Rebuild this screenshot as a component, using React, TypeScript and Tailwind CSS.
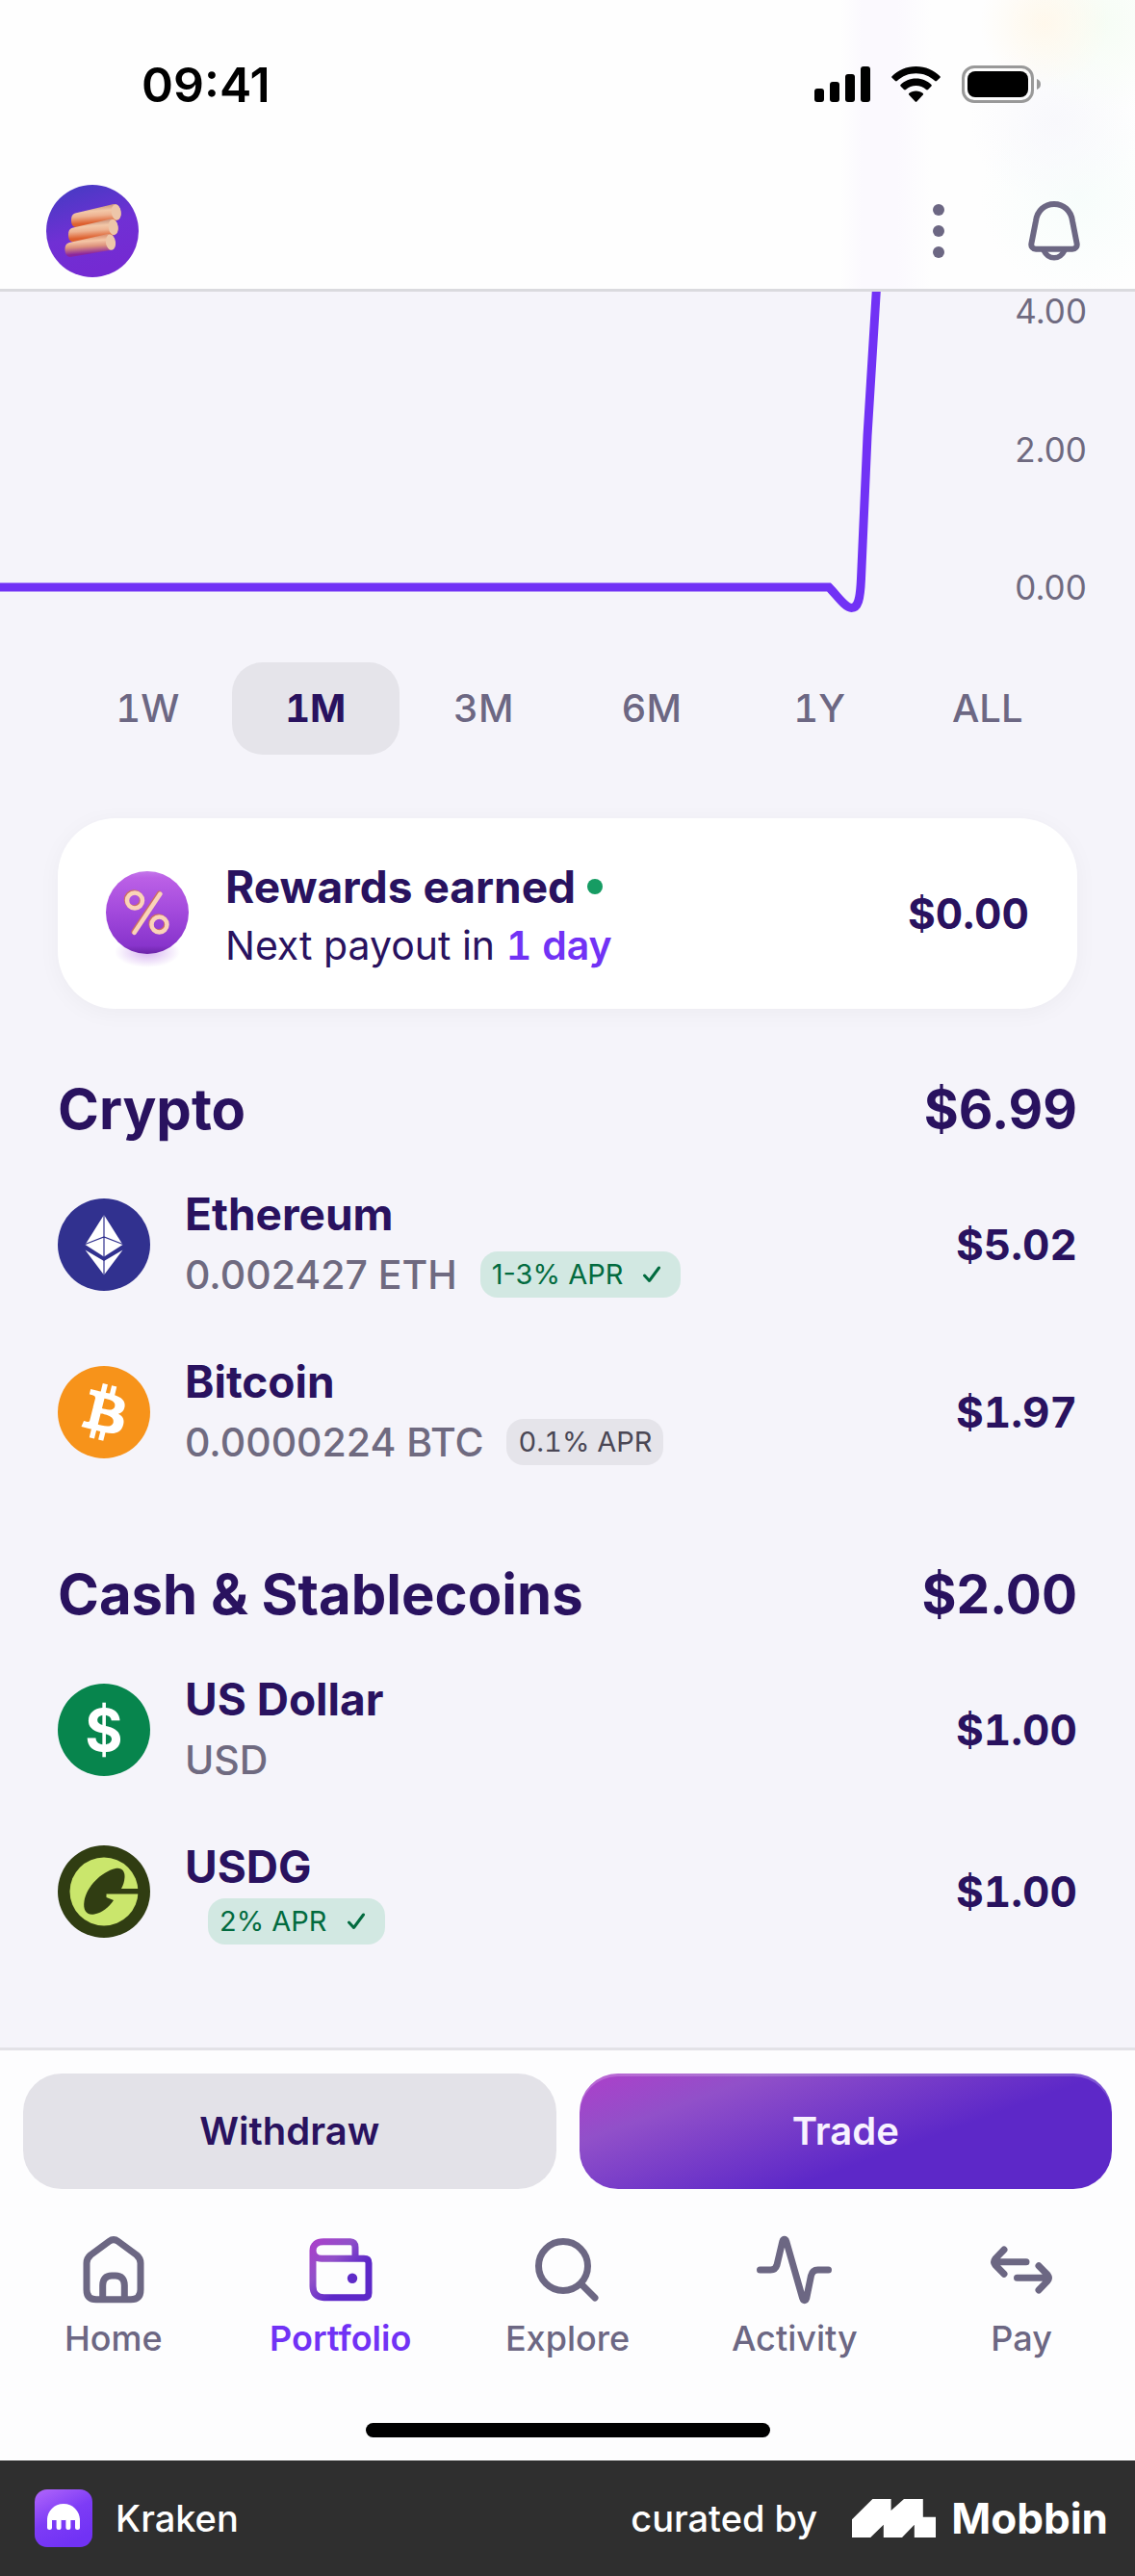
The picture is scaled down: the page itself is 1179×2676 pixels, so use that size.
import type { ReactNode } from "react";

const ranges = ["1W", "1M", "3M", "6M", "1Y", "ALL"];

function StatusIcons() {
  return (
    <svg width="236" height="40" viewBox="0 0 236 40" aria-hidden="true">
      <rect x="0" y="24" width="10" height="14" rx="3" />
      <rect x="16" y="17" width="10" height="21" rx="3" />
      <rect x="32" y="9" width="10" height="29" rx="3" />
      <rect x="48" y="1" width="10" height="37" rx="3" />
      <path d="M105.500 1C115.500 1 124 5 130.500 11.300Q131.200 12 130.500 12.700L127 16Q126 16.800 125.200 16C119.500 11 113 8.300 105.500 8.300S91.500 11 85.800 16Q85 16.800 84 16L80.500 12.700Q79.800 12 80.500 11.300C87 5 95.500 1 105.500 1Z" />
      <path d="M105.500 13.500C112 13.500 117.300 16 121.500 20Q122.200 20.800 121.500 21.500L118 25Q117 25.800 116 25C113 22.400 109.500 21 105.500 21S98 22.400 95 25Q94 25.800 93 25L89.500 21.500Q88.800 20.800 89.500 20C93.700 16 99 13.500 105.500 13.500Z" />
      <path d="M105.500 26.500C108.500 26.500 111 27.400 112.800 29Q113.500 29.700 112.800 30.500L106.300 37.500Q105.500 38.300 104.700 37.500L98.200 30.500Q97.500 29.700 98.200 29C100 27.400 102.500 26.500 105.500 26.500Z" />
      <rect x="154.500" y="1.500" width="72" height="36" rx="11.500" fill="none" stroke="#999999" strokeWidth="3" />
      <rect x="159" y="6" width="63" height="27" rx="8" />
      <path d="M231 14C234 15 235 17 235 19.500S234 24 231 25Z" fill="#999999" />
    </svg>
  );
}

function Avatar() {
  return (
    <svg className="size-24" viewBox="0 0 96 96" aria-hidden="true">
      <defs>
        <linearGradient id="avatarBg" x1="0.300" y1="0" x2="0.600" y2="0.900">
          <stop offset="0" stopColor="#483ac4" />
          <stop offset="0.550" stopColor="#7030d4" />
          <stop offset="1" stopColor="#742ad2" />
        </linearGradient>
        <linearGradient id="rod" x1="0.420" y1="0.120" x2="0.540" y2="0.880">
          <stop offset="0" stopColor="#cf9c86" />
          <stop offset="0.250" stopColor="#f3c8a8" />
          <stop offset="0.500" stopColor="#eeb291" />
          <stop offset="0.900" stopColor="#dd5f2e" />
        </linearGradient>
        <linearGradient id="rodLow" x1="0.420" y1="0.120" x2="0.540" y2="0.880">
          <stop offset="0" stopColor="#dd9678" />
          <stop offset="0.250" stopColor="#f5c6a6" />
          <stop offset="0.550" stopColor="#dd927c" />
          <stop offset="0.950" stopColor="#8b259d" />
        </linearGradient>
      </defs>
      <circle cx="48" cy="48" r="48" fill="url(#avatarBg)" />
      <path d="M30 29.500L70 20C75 19.500 77 24 77.500 29S75.500 36.500 72 37L31 44C27 44 26 40 26 36.500S27 30.500 30 29.500Z" fill="url(#rod)" />
      <ellipse cx="72.700" cy="28.500" rx="5" ry="8.200" fill="#edc6a9" transform="rotate(-8 72.700 28.500)" />
      <path d="M27 44.800L67 35.500C72 35 74 39.500 74.500 44.500S72.500 52 69 52.500L28 59.300C24 59.300 23 55.500 23 51.800S24 45.800 27 44.800Z" fill="url(#rod)" />
      <ellipse cx="69.700" cy="44" rx="5" ry="8.200" fill="#edc6a9" transform="rotate(-8 69.700 44)" />
      <path d="M24 60L64 51C69 50.500 71 55 71.500 60S69.500 67.500 66 68L25 75C21 75 19.500 71 19.500 67.200S20.500 61 24 60Z" fill="url(#rodLow)" />
      <ellipse cx="67" cy="59.700" rx="5" ry="8.200" fill="#edc6a9" transform="rotate(-8 67 59.700)" />
    </svg>
  );
}

function DotsIcon() {
  return (
    <svg width="12" height="72" viewBox="0 0 12 72" fill="#6c6783" aria-hidden="true">
      <circle cx="6" cy="14" r="6" />
      <circle cx="6" cy="36" r="6" />
      <circle cx="6" cy="58" r="6" />
    </svg>
  );
}

function BellIcon() {
  return (
    <svg width="72" height="72" viewBox="0 0 72 72" fill="none" stroke="#6c6783" strokeWidth="6" aria-hidden="true">
      <path d="M36 8C26 8 18.500 15 17 25.500L12.400 49C11.800 52.500 14 54.700 17 54.700H55C58 54.700 60.200 52.500 59.600 49L55 25.500C53.500 15 46 8 36 8Z" />
      <path d="M25 56C27.500 61 31.500 63.800 36 63.800S44.500 61 47 56" strokeWidth="5.500" />
    </svg>
  );
}

function PercentIcon() {
  return (
    <svg width="86" height="100" viewBox="0 0 86 100" className="-mb-3 shrink-0 overflow-visible" aria-hidden="true">
      <defs>
        <linearGradient id="pctBg" x1="0" y1="0" x2="0" y2="1">
          <stop offset="0" stopColor="#c478ea" />
          <stop offset="0.080" stopColor="#bb60e6" />
          <stop offset="0.500" stopColor="#a249dc" />
          <stop offset="0.900" stopColor="#8834cc" />
          <stop offset="1" stopColor="#6a24a6" />
        </linearGradient>
        <radialGradient id="pctShadow">
          <stop offset="0" stopColor="#a55be0" stopOpacity="0.450" />
          <stop offset="1" stopColor="#a55be0" stopOpacity="0" />
        </radialGradient>
      </defs>
      <ellipse cx="43" cy="84" rx="34" ry="16" fill="url(#pctShadow)" />
      <circle cx="43" cy="43" r="43" fill="url(#pctBg)" />
      <g fill="none" strokeLinecap="round" strokeWidth="4.500">
        <g stroke="#cc6f62" transform="translate(-1 -1)">
          <circle cx="30" cy="30.500" r="8" />
          <circle cx="55.500" cy="55.500" r="8" />
          <path d="M56.500 23.500L29.500 64" />
        </g>
        <g stroke="#fad3b8">
          <circle cx="30" cy="30.500" r="8" />
          <circle cx="55.500" cy="55.500" r="8" />
          <path d="M56.500 23.500L29.500 64" />
        </g>
      </g>
    </svg>
  );
}

function EthIcon() {
  return (
    <svg className="size-24" viewBox="0 0 96 96" aria-hidden="true">
      <circle cx="48" cy="48" r="48" fill="#31318f" />
      <path d="M48 17L67.500 48L48 60.500L28.500 48Z" fill="#ffffff" />
      <path d="M28.500 53.500L48 65L67.500 53.500L48 79.500Z" fill="#ffffff" />
      <path d="M48 17V80M28.500 47.500L48 40L67.500 47.500" fill="none" stroke="#31318f" strokeWidth="1.200" />
    </svg>
  );
}

function BtcIcon() {
  return (
    <svg className="size-24" viewBox="0 0 32 32" aria-hidden="true">
      <circle cx="16" cy="16" r="16" fill="#f7931a" />
      <path
        fill="#ffffff"
        d="M23.189 14.02c.314-2.096-1.283-3.223-3.465-3.975l.708-2.84-1.728-.43-.69 2.765c-.454-.114-.92-.22-1.385-.326l.695-2.783L15.596 6l-.708 2.839c-.376-.086-.746-.17-1.104-.26l.002-.009-2.384-.595-.46 1.846s1.283.294 1.256.312c.7.175.826.638.805 1.006l-.806 3.235c.048.012.11.03.18.057l-.183-.045-1.13 4.532c-.086.212-.303.531-.793.41.018.025-1.256-.313-1.256-.313l-.858 1.978 2.25.561c.418.105.828.215 1.231.318l-.715 2.872 1.727.43.708-2.84c.472.127.93.245 1.378.357l-.706 2.828 1.728.43.715-2.866c2.948.558 5.164.333 6.097-2.333.752-2.146-.037-3.385-1.588-4.192 1.13-.26 1.98-1.003 2.207-2.538zm-3.95 5.538c-.533 2.147-4.148.986-5.32.695l.95-3.805c1.172.293 4.929.872 4.37 3.11zm.535-5.569c-.487 1.953-3.495.96-4.47.717l.86-3.45c.975.243 4.118.696 3.61 2.733z"
      />
    </svg>
  );
}

function UsdIcon() {
  return (
    <span className="flex size-24 items-center justify-center rounded-full bg-[#07854d] text-[60px] leading-none font-bold text-white" aria-hidden="true">
      $
    </span>
  );
}

function UsdgIcon() {
  return (
    <svg className="size-24" viewBox="0 0 96 96" aria-hidden="true">
      <circle cx="48" cy="48" r="48" fill="#303d12" />
      <circle cx="48" cy="48" r="35.500" fill="#cae66c" />
      <path d="M60 24C66 22.500 70 26.500 69.500 33C69.200 38 68 41.500 66 45H86V50.500H50.500V54L58 57C53 64.500 46 70 38 71.500C30 73 26 67.500 27.500 58C30 43 45 27.500 60 24Z" fill="#303d12" />
    </svg>
  );
}

function CheckIcon() {
  return (
    <svg width="20" height="18" viewBox="0 0 20 18" fill="none" stroke="#026b3f" strokeWidth="3" strokeLinecap="round" strokeLinejoin="round" aria-hidden="true">
      <path d="M2.500 10L7.500 15.500L17.500 2" />
    </svg>
  );
}

function Badge({ children, earning = false }: { children: ReactNode; earning?: boolean }) {
  return earning ? (
    <span className="flex h-12 items-center gap-5 rounded-[18px] bg-[#d2e8e2] pr-5 pl-3 text-[29px] text-[#026b3f]">
      {children}
      <CheckIcon />
    </span>
  ) : (
    <span className="flex h-12 items-center rounded-[18px] bg-[#e5e4ea] px-3 text-[29px] text-[#4a4755] tabular-nums">{children}</span>
  );
}

function AssetRow({ icon, name, amount, badge, value }: { icon: ReactNode; name: string; amount?: string; badge?: ReactNode; value: string }) {
  return (
    <li>
      <button type="button" className="flex w-full items-center text-left">
        {icon}
        <span className="ml-9 flex flex-1 flex-col gap-[3px]">
          <span className="text-[46px] leading-[60px] font-bold">{name}</span>
          <span className="flex items-center gap-6">
            {amount ? <span className="text-[41px] leading-[60px] font-medium text-[#6f6a80]">{amount}</span> : <span />}
            {badge}
          </span>
        </span>
        <span className="text-[44px] leading-[60px] font-bold tabular-nums">{value}</span>
      </button>
    </li>
  );
}

function AssetSection({ title, total, children }: { title: string; total: string; children: ReactNode }) {
  return (
    <section>
      <div className="flex items-center justify-between leading-[72px] font-bold">
        <h2 className="text-[58px]">{title}</h2>
        <span className="text-[55px]">{total}</span>
      </div>
      <ul className="mt-[43px] flex flex-col gap-[51px]">{children}</ul>
    </section>
  );
}

function NavIcon({ children, stroke = "#6c6783" }: { children: ReactNode; stroke?: string }) {
  return (
    <svg width="72" height="72" viewBox="0 0 72 72" fill="none" stroke={stroke} strokeWidth="7" strokeLinecap="round" strokeLinejoin="round" className="overflow-visible" aria-hidden="true">
      {children}
    </svg>
  );
}

function NavItem({ label, icon, active = false }: { label: string; icon: ReactNode; active?: boolean }) {
  return (
    <a
      href="#"
      aria-current={active ? "page" : undefined}
      className={active ? "flex flex-col items-center gap-[13px] font-semibold text-[#7132f5]" : "flex flex-col items-center gap-[13px] font-medium text-[#6c6783]"}
    >
      {icon}
      <span className="text-[36px] leading-[44px]">{label}</span>
    </a>
  );
}

export default function App() {
  return (
    <div className="flex min-h-screen flex-col bg-[#f5f4fa] font-['Inter',sans-serif] text-[#29125f]">
      <header className="border-b-[3px] border-[#dadade] bg-[#fefefe] bg-[linear-gradient(90deg,transparent_74%,#fbf9fe_76%,#fbf9fe_79%,transparent_82%),radial-gradient(circle_at_92%_8%,#fff8ec_0%,transparent_6%),radial-gradient(circle_at_97%_8%,#f6fdf5_0%,transparent_8%),radial-gradient(circle_at_93%_42%,#f8f8fc_0%,transparent_8%),radial-gradient(circle_at_95%_68%,#f7fdfb_0%,transparent_9%)]">
        <div className="flex h-[176px] items-center justify-between pr-[97px] pl-[147px] text-black">
          <time className="text-[50px] font-semibold">09:41</time>
          <StatusIcons />
        </div>
        <div className="flex items-center justify-between px-12 pt-4 pb-3">
          <button type="button" aria-label="Profile">
            <Avatar />
          </button>
          <div className="flex items-center gap-[78px]">
            <button type="button" aria-label="More options">
              <DotsIcon />
            </button>
            <button type="button" aria-label="Notifications">
              <BellIcon />
            </button>
          </div>
        </div>
      </header>

      <main className="flex-1 pb-[107px]">
        <div className="relative h-[385px]">
          <svg className="block h-full w-full" viewBox="0 0 1179 385" preserveAspectRatio="none" role="img" aria-label="Portfolio value">
            <path d="M0 307H861C869 315 878 328.500 884.500 328.500C891 328.500 893.500 321 894.500 298L901 150L910.500 -4" fill="none" stroke="#7132f5" strokeWidth="9" />
          </svg>
          <div className="absolute top-0 right-[50px] flex h-[327px] flex-col justify-between text-[35px] leading-[40px] text-[#6f6a80]">
            <span>4.00</span>
            <span>2.00</span>
            <span>0.00</span>
          </div>
        </div>

        <div className="grid grid-cols-6 px-[66px] tabular-nums">
          {ranges.map((range) => (
            <button
              key={range}
              type="button"
              aria-pressed={range === "1M"}
              className={range === "1M" ? "h-24 rounded-[32px] bg-[#e5e4ea] text-[40px] font-bold" : "h-24 rounded-[32px] text-[40px] font-medium text-[#6c6783]"}
            >
              {range}
            </button>
          ))}
        </div>

        <div className="px-[60px]">
          <button type="button" className="mt-[66px] flex h-[198px] w-full items-center rounded-[60px] bg-white px-[50px] text-left shadow-[0_4px_24px_rgba(0,0,0,0.04)]">
            <PercentIcon />
            <span className="ml-[38px] flex flex-1 flex-col pt-1">
              <span className="flex items-center gap-3 text-[46px] leading-[62px] font-bold">
                Rewards earned
                <span className="size-4 rounded-full bg-[#169c63]" />
              </span>
              <span className="text-[41px] leading-[60px]">
                Next payout in <span className="font-semibold text-[#7132f5] tabular-nums">1 day</span>
              </span>
            </span>
            <span className="text-[44px] leading-[60px] font-bold tabular-nums">$0.00</span>
          </button>

          <div className="mt-[68px] flex flex-col gap-[92px]">
            <AssetSection title="Crypto" total="$6.99">
              <AssetRow icon={<EthIcon />} name="Ethereum" amount="0.002427 ETH" badge={<Badge earning>1-3% APR</Badge>} value="$5.02" />
              <AssetRow icon={<BtcIcon />} name="Bitcoin" amount="0.0000224 BTC" badge={<Badge>0.1% APR</Badge>} value="$1.97" />
            </AssetSection>
            <AssetSection title="Cash & Stablecoins" total="$2.00">
              <AssetRow icon={<UsdIcon />} name="US Dollar" amount="USD" value="$1.00" />
              <AssetRow icon={<UsdgIcon />} name="USDG" badge={<Badge earning>2% APR</Badge>} value="$1.00" />
            </AssetSection>
          </div>
        </div>
      </main>

      <div className="border-t-[3px] border-[#e3e2e7] bg-[#fdfdfe]">
        <div className="grid grid-cols-2 gap-6 p-6 pb-12 text-[40px] font-semibold">
          <button type="button" className="h-[120px] rounded-[40px] bg-[#e3e2e8]">
            Withdraw
          </button>
          <button type="button" className="h-[120px] rounded-[40px] bg-[linear-gradient(160deg,#ad3fca_0%,#9150c9_22%,#5d28c8_62%)] text-[#f8f2ff] shadow-[inset_0_3px_0_rgba(255,255,255,0.2)]">
            Trade
          </button>
        </div>
        <nav className="grid grid-cols-5">
          <NavItem
            label="Home"
            icon={
              <NavIcon>
                <path d="M8 29C8 25.500 9.500 22.800 12.200 20.500L31.500 6.200C34.500 4 37.500 4 40.500 6.200L59.800 20.500C62.500 22.800 64 25.500 64 29V56.500C64 63.500 60.500 66.800 54 66.800H18C11.500 66.800 8 63.500 8 56.500Z" />
                <path d="M24.700 66V52C24.700 45.500 27.800 42 34 42H38C44.200 42 47.300 45.500 47.300 52V66" />
              </NavIcon>
            }
          />
          <NavItem
            label="Portfolio"
            active
            icon={
              <NavIcon stroke="url(#walletStroke)">
                <defs>
                  <linearGradient id="walletStroke" x1="4" y1="4" x2="68" y2="68" gradientUnits="userSpaceOnUse">
                    <stop offset="0" stopColor="#ad3fca" />
                    <stop offset="0.350" stopColor="#9150c9" />
                    <stop offset="0.650" stopColor="#5d28c8" />
                  </linearGradient>
                </defs>
                <path d="M51 24V12.500C51 8.500 49 6.700 46 6.700H18C11 6.700 7 10.200 7 16V53C7 60.500 11 64.700 18.500 64.700H60C63.500 64.700 65 63 65 60V29C65 26 63.500 24.300 60 24.300H16C10.500 24.300 7 21 7 15.500" />
                <circle cx="48" cy="44.700" r="5.200" fill="#5f2bc8" stroke="none" />
              </NavIcon>
            }
          />
          <NavItem
            label="Explore"
            icon={
              <NavIcon>
                <circle cx="32" cy="32" r="25.500" />
                <path d="M50.500 50.500L65 65" />
              </NavIcon>
            }
          />
          <NavItem
            label="Activity"
            icon={
              <NavIcon>
                <path d="M0.500 36H11.500C15 36 17 34.300 18 31L23.800 6.500C24.800 3.500 26.800 3.500 27.800 6.500L44.700 65.500C45.700 68.500 47.700 68.500 48.700 65.500L53.500 42C54.500 38 57 36 60.500 36H71.500" />
              </NavIcon>
            }
          />
          <NavItem
            label="Pay"
            icon={
              <NavIcon>
                <path d="M41 27.700H8M18 15L8.700 24.700Q6.500 27.700 8.700 30.700L18 40.300" />
                <path d="M31.500 44.300H64.500M54 31.700L63.300 41.300Q65.500 44.300 63.300 47.300L54 57" />
              </NavIcon>
            }
          />
        </nav>
        <div className="flex justify-center pt-[66px] pb-6">
          <div className="h-[15px] w-[420px] rounded-full bg-black" />
        </div>
      </div>

      <footer className="flex h-[120px] items-center bg-[#2f2f2f] pr-7 pl-9 text-[38px] font-medium text-white">
        <svg width="60" height="60" viewBox="0 0 60 60" aria-hidden="true">
          <defs>
            <linearGradient id="krakenBg" x1="0" y1="0" x2="0.500" y2="1">
              <stop offset="0" stopColor="#b266fb" />
              <stop offset="0.550" stopColor="#7d3cf6" />
              <stop offset="1" stopColor="#7132f5" />
            </linearGradient>
          </defs>
          <rect width="60" height="60" rx="13" fill="url(#krakenBg)" />
          <path d="M13 32C13 22.500 20.500 15 30 15S47 22.500 47 32Q44.500 28 42.200 32H37.200Q34.900 28 32.500 32H27.500Q25 28 22.800 32H17.800Q15.500 28 13 32Z" fill="#ffffff" />
          <path d="M15.500 32V39.500M25.100 31V39.500M34.900 31V39.500M44.500 32V39.500" stroke="#ffffff" strokeWidth="5" strokeLinecap="round" />
        </svg>
        <span className="ml-6 flex-1">Kraken</span>
        <span>curated by</span>
        <svg className="mr-4 ml-9" width="87" height="40" viewBox="0 0 87 40" fill="#ffffff" aria-hidden="true">
          <path d="M0 40V21.300L21.400 0H40.600V12L54 0H73.800V18.700H87V40H64.800V26.700L52 40H32.800V26.700L19.200 40Z" />
        </svg>
        <span className="text-[44px] font-bold">Mobbin</span>
      </footer>
    </div>
  );
}
